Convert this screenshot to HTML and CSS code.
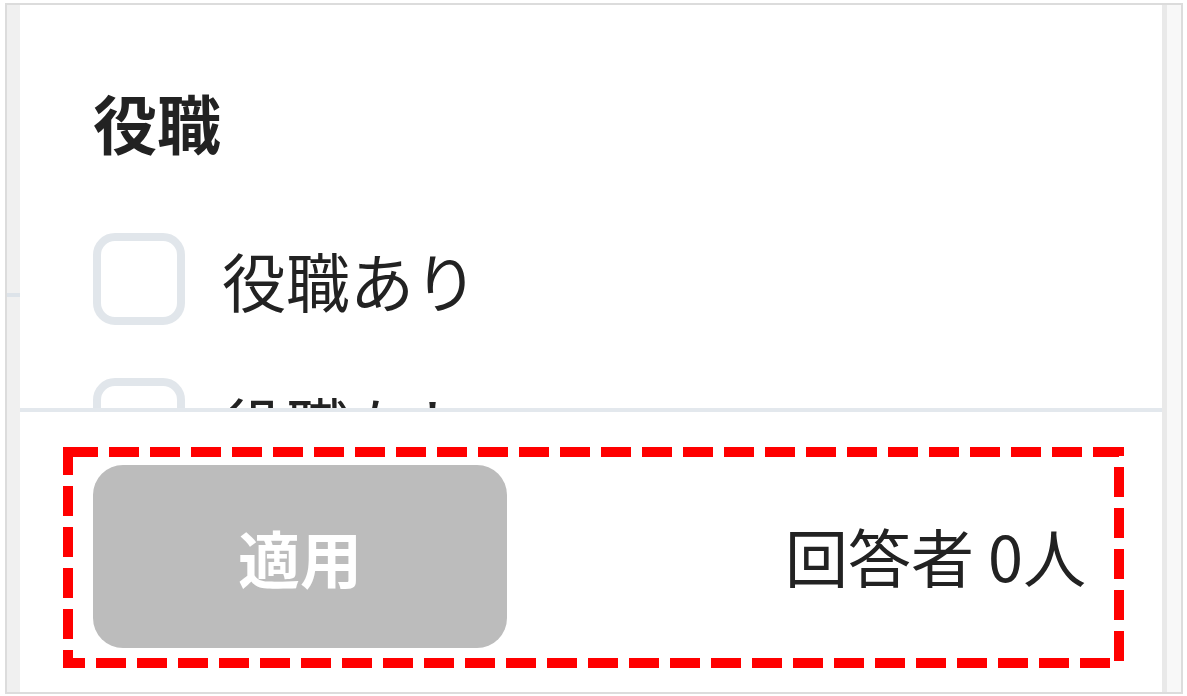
FILE: index.html
```html
<html>
<head>
	<meta charset="utf-8">
	<link rel="stylesheet" href="styles.css">
</head>
<body>
	<div class="frame">
		<div class="side_left">
			<div class="side_rule"></div>
		</div>
		<div class="panel">
			<div class="filter">
				<div class="heading">役職</div>
				<label class="option">
					<span class="box"></span>
					<span class="option_text">役職あり</span>
				</label>
				<label class="option">
					<span class="box"></span>
					<span class="option_text">役職なし</span>
				</label>
			</div>
			<div class="footer">
				<div class="footer_row">
					<svg class="mark" width="1061" height="221" viewBox="0 0 1061 221">
						<rect x="5" y="5" width="1051" height="211" fill="none" stroke="#ff0000" stroke-width="10" stroke-dasharray="30 11"/>
					</svg>
					<div class="apply">適用</div>
					<div class="count">回答者 0人</div>
				</div>
			</div>
		</div>
		<div class="side_right"></div>
	</div>
</body>
</html>
```

FILE: styles.css
```css
body
{
	margin: 0;
	background-color: white;
	font-family: "Noto Sans CJK JP", "Noto Sans", sans-serif;
	color: #222;
}
.frame
{
	display: flex;
	box-sizing: border-box;
	width: 1178px;
	height: 691px;
	margin: 3px 0 0 5px;
	border: 2px solid #dcdcdc;
}
.side_left
{
	width: 13px;
	background-color: #f0f0f0;
	padding-top: 288px;
}
.side_rule
{
	height: 4px;
	background-color: #dde3e9;
}
.side_right
{
	width: 14px;
	border-left: 5px solid #e9e9e9;
	background-color: #f8f8f8;
}
.panel
{
	flex: 1;
	display: flex;
	flex-direction: column;
	background-color: white;
}
.filter
{
	flex: 1;
	overflow: hidden;
	padding: 78px 0 0 73px;
}
.heading
{
	font-size: 64px;
	font-weight: bold;
	line-height: 76px;
}
.option
{
	display: flex;
	align-items: center;
	gap: 37px;
	margin-top: 53px;
}
.heading + .option
{
	margin-top: 74px;
}
.box
{
	box-sizing: border-box;
	width: 92px;
	height: 92px;
	border: 8px solid #e1e6eb;
	border-radius: 22px;
}
.option_text
{
	font-size: 64px;
	line-height: 92px;
}
.footer
{
	height: 284px;
	box-sizing: border-box;
	border-top: 4px solid #e3e8ed;
	padding: 35px 38px 24px 43px;
}
.footer_row
{
	position: relative;
	display: flex;
	align-items: center;
	justify-content: space-between;
	height: 221px;
	box-sizing: border-box;
	padding: 18px 38px 20px 30px;
}
.mark
{
	position: absolute;
	left: 0;
	top: 0;
}
.apply
{
	width: 414px;
	height: 183px;
	border-radius: 30px;
	background-color: #bcbcbc;
	color: white;
	font-size: 62px;
	font-weight: bold;
	display: flex;
	align-items: center;
	justify-content: center;
}
.count
{
	font-size: 63px;
	margin-top: -4px;
}
```
